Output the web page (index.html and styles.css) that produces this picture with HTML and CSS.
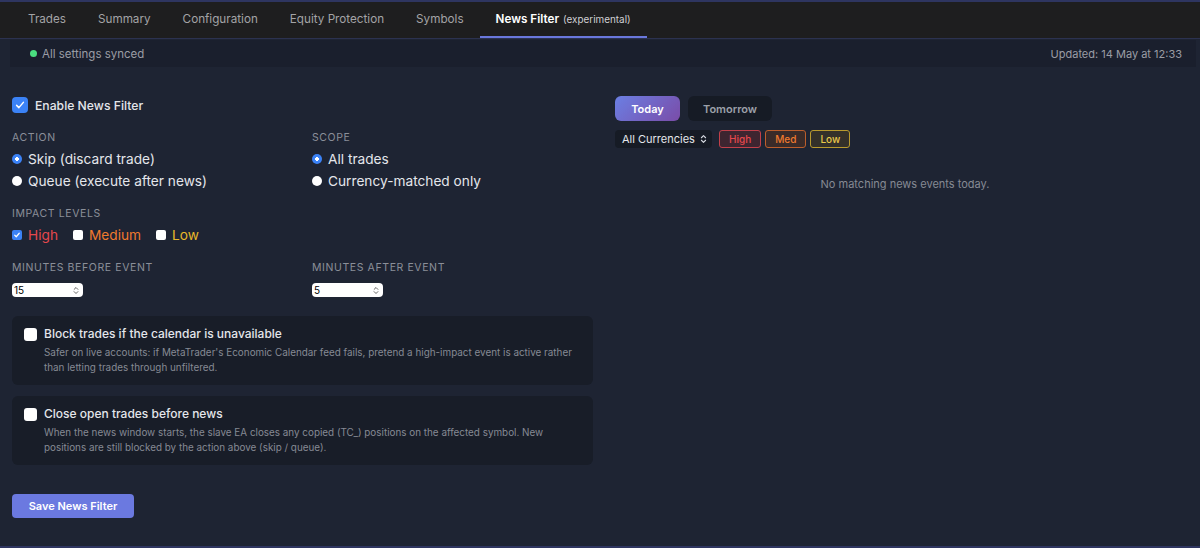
FILE: index.html
```html
<!DOCTYPE html>
<html>

<head>
    <title>News Filter</title>
    <link rel="stylesheet" href="styles.css">
</head>

<body>
    <div class="topline"></div>

    <nav class="tabs">
        <a class="tab">Trades</a>
        <a class="tab">Summary</a>
        <a class="tab">Configuration</a>
        <a class="tab">Equity Protection</a>
        <a class="tab">Symbols</a>
        <a class="tab active">News Filter <small>(experimental)</small></a>
    </nav>

    <div class="status">
        <span class="sync"><span class="dot"></span>All settings synced</span>
        <span class="updated">Updated: 14 May at 12:33</span>
    </div>

    <main class="content">

        <section class="settings">

            <div class="enable">
                <span class="box big checked">
                    <svg viewBox="0 0 16 16" width="12" height="12"><path d="M3.5 8.5l3 3 6-7" fill="none" stroke="#fff" stroke-width="2" stroke-linecap="round" stroke-linejoin="round"/></svg>
                </span>
                Enable News Filter
            </div>

            <div class="grid">
                <div class="group">
                    <div class="label">Action</div>
                    <div class="option"><span class="radio on"></span>Skip (discard trade)</div>
                    <div class="option"><span class="radio"></span>Queue (execute after news)</div>
                </div>
                <div class="group">
                    <div class="label">Scope</div>
                    <div class="option"><span class="radio on"></span>All trades</div>
                    <div class="option"><span class="radio"></span>Currency-matched only</div>
                </div>
            </div>

            <div class="group impact">
                <div class="label">Impact levels</div>
                <div class="levels">
                    <span class="level high">
                        <span class="box checked">
                            <svg viewBox="0 0 16 16" width="8" height="8"><path d="M3.5 8.5l3 3 6-7" fill="none" stroke="#fff" stroke-width="2.4" stroke-linecap="round" stroke-linejoin="round"/></svg>
                        </span>High
                    </span>
                    <span class="level medium"><span class="box"></span>Medium</span>
                    <span class="level low"><span class="box"></span>Low</span>
                </div>
            </div>

            <div class="grid minutes">
                <div class="group">
                    <div class="label">Minutes before event</div>
                    <div class="number">15
                        <svg viewBox="0 0 8 12" width="6" height="9"><path d="M1.5 4.5L4 2l2.5 2.5M1.5 7.5L4 10l2.5-2.5" fill="none" stroke="#555" stroke-width="1.2" stroke-linecap="round" stroke-linejoin="round"/></svg>
                    </div>
                </div>
                <div class="group">
                    <div class="label">Minutes after event</div>
                    <div class="number">5
                        <svg viewBox="0 0 8 12" width="6" height="9"><path d="M1.5 4.5L4 2l2.5 2.5M1.5 7.5L4 10l2.5-2.5" fill="none" stroke="#555" stroke-width="1.2" stroke-linecap="round" stroke-linejoin="round"/></svg>
                    </div>
                </div>
            </div>

            <div class="card">
                <span class="box card-box"></span>
                <div>
                    <div class="card-title">Block trades if the calendar is unavailable</div>
                    <div class="card-text">Safer on live accounts: if MetaTrader's Economic Calendar feed fails, pretend a high-impact event is active rather than letting trades through unfiltered.</div>
                </div>
            </div>

            <div class="card">
                <span class="box card-box"></span>
                <div>
                    <div class="card-title">Close open trades before news</div>
                    <div class="card-text">When the news window starts, the slave EA closes any copied (TC_) positions on the affected symbol. New positions are still blocked by the action above (skip / queue).</div>
                </div>
            </div>

            <button class="save">Save News Filter</button>
        </section>

        <section class="calendar">
            <div class="days">
                <button class="day active">Today</button>
                <button class="day">Tomorrow</button>
            </div>
            <div class="filters">
                <div class="select">All Currencies
                    <svg viewBox="0 0 8 12" width="7" height="10"><path d="M1.5 4.5L4 2l2.5 2.5M1.5 7.5L4 10l2.5-2.5" fill="none" stroke="#d8dbe2" stroke-width="1.3" stroke-linecap="round" stroke-linejoin="round"/></svg>
                </div>
                <span class="pill high">High</span>
                <span class="pill med">Med</span>
                <span class="pill low">Low</span>
            </div>
            <p class="empty">No matching news events today.</p>
        </section>

    </main>
</body>

</html>
```

FILE: styles.css
```css
* {
    box-sizing: border-box;
}

body {
    margin: 0;
    height: 548px;
    overflow: hidden;
    background-color: #1e2433;
    font-family: "Inter", "Noto Sans", sans-serif;
    color: #e4e6eb;
    border-bottom: 2px solid #2e3560;
}

.topline {
    height: 2px;
    background-color: #2e3560;
}

.tabs {
    display: flex;
    height: 37px;
    padding-left: 12px;
    background-color: #1e1e1f;
    border-bottom: 1px solid #2c3250;
}

.tab {
    display: flex;
    align-items: center;
    padding: 0 16px;
    font-size: 11.7px;
    color: #a3a3a6;
    border-bottom: 2px solid transparent;
}

.tab.active {
    color: #fff;
    font-weight: 600;
    border-bottom-color: #6a78dc;
}

.tab small {
    font-size: 9.9px;
    font-weight: 400;
    color: #d0d0d3;
    margin-left: 4px;
}

.status {
    display: flex;
    justify-content: space-between;
    align-items: center;
    height: 27px;
    margin: 1px 4px 0 10px;
    padding: 0 14px 0 20px;
    background-color: #1a1f2d;
    font-size: 11.5px;
    color: #9a9da5;
}

.updated {
    font-size: 11px;
}

.sync {
    display: flex;
    align-items: center;
}

.dot {
    width: 7px;
    height: 7px;
    border-radius: 50%;
    background-color: #4ade80;
    margin-right: 5px;
}

.content {
    display: flex;
    gap: 22px;
    padding: 29px 5px 0 12px;
}

.settings {
    width: 581px;
    flex-shrink: 0;
}

.calendar {
    flex: 1;
}

.enable {
    display: flex;
    align-items: center;
    gap: 7px;
    height: 18px;
    font-size: 12.2px;
    font-weight: 500;
    color: #e4e6eb;
    margin-bottom: 17px;
}

.box {
    display: inline-flex;
    align-items: center;
    justify-content: center;
    width: 10px;
    height: 10px;
    border-radius: 2px;
    background-color: #fff;
    flex-shrink: 0;
}

.box.checked {
    background-color: #3b82f6;
}

.box.big {
    width: 16px;
    height: 16px;
    border-radius: 4px;
}

.grid {
    display: grid;
    grid-template-columns: 300px 1fr;
}

.label {
    height: 14px;
    line-height: 14px;
    font-size: 10.5px;
    letter-spacing: 0.6px;
    text-transform: uppercase;
    color: #8b8f99;
    margin-bottom: 3px;
}

.option {
    display: flex;
    align-items: center;
    height: 22px;
    font-size: 13.7px;
    color: #e4e6eb;
}

.radio {
    width: 10px;
    height: 10px;
    border-radius: 50%;
    background-color: #fff;
    margin-right: 6px;
}

.radio.on {
    background: radial-gradient(circle, #fff 0 1.6px, #3b82f6 2px);
}

.impact {
    margin-top: 15px;
}

.levels {
    display: flex;
    height: 22px;
    align-items: center;
    font-size: 13.7px;
}

.level {
    display: flex;
    align-items: center;
    margin-right: 15px;
}

.level .box {
    margin-right: 6px;
}

.level.high {
    color: #e5484d;
}

.level.medium {
    color: #f07a2e;
}

.level.low {
    color: #e8b82a;
}

.minutes {
    margin-top: 15px;
}

.minutes .label {
    margin-bottom: 8px;
}

.number {
    display: flex;
    align-items: center;
    justify-content: space-between;
    width: 71px;
    height: 14px;
    padding: 0 4px 0 2px;
    border-radius: 4px;
    background-color: #fff;
    font-size: 10px;
    color: #000;
}

.card {
    display: flex;
    gap: 7px;
    margin-top: 19px;
    padding: 10px 10px 10px 12px;
    height: 69px;
    border-radius: 6px;
    background-color: #181d28;
}

.card + .card {
    margin-top: 11px;
}

.card-box {
    width: 13px;
    height: 13px;
    border-radius: 3px;
    margin-top: 2px;
}

.card-title {
    font-size: 12px;
    font-weight: 500;
    line-height: 16px;
    color: #e4e6eb;
    margin-bottom: 3px;
}

.card-text {
    font-size: 9.9px;
    line-height: 15px;
    color: #868a94;
}

.save {
    display: block;
    margin-top: 29px;
    width: 122px;
    height: 24px;
    border: none;
    border-radius: 4px;
    background-color: #6b79e0;
    color: #fff;
    font-family: inherit;
    font-size: 11px;
    font-weight: 600;
}

.days {
    display: flex;
    gap: 8px;
}

.day {
    height: 25px;
    padding: 0 15px;
    border: none;
    border-radius: 6px;
    background-color: #161b25;
    color: #9ca0a9;
    font-family: inherit;
    font-size: 11px;
    font-weight: 600;
}

.day.active {
    width: 65px;
    background-image: linear-gradient(135deg, #6b7fe3 0%, #7a4ca8 100%);
    color: #fff;
}

.filters {
    display: flex;
    align-items: center;
    gap: 4px;
    margin-top: 9px;
}

.select {
    display: flex;
    align-items: center;
    justify-content: space-between;
    width: 97px;
    height: 18px;
    padding: 0 5px 0 7px;
    margin-right: 3px;
    border-radius: 4px;
    background-color: #161b25;
    font-size: 11px;
    color: #e4e6eb;
}

.pill {
    display: flex;
    align-items: center;
    justify-content: center;
    height: 18px;
    padding: 0 9px;
    border-radius: 3px;
    border: 1px solid;
    font-size: 10px;
    font-weight: 500;
}

.pill.high {
    color: #e5484d;
    border-color: #c2404a;
    background-color: #3e2530;
}

.pill.med {
    color: #f07a2e;
    border-color: #bc5e2c;
    background-color: #3a2b29;
}

.pill.low {
    color: #e8c84a;
    border-color: #b99a2e;
    background-color: #33302a;
}

.empty {
    margin: 29px 0 0;
    text-align: center;
    font-size: 11px;
    color: #868a94;
}
```
